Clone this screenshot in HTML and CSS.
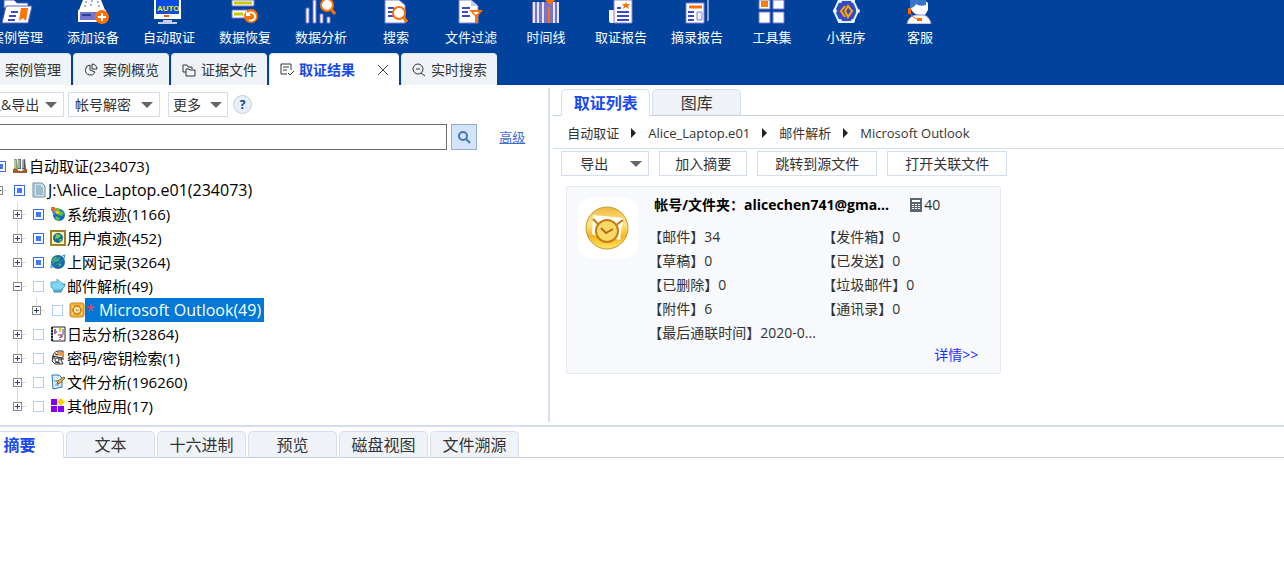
FILE: index.html
```html
<!DOCTYPE html>
<html lang="zh-CN">
<head>
  <meta charset="UTF-8">
  <meta name="viewport" content="width=device-width, initial-scale=1.0">
  <title>取证结果</title>
  <link rel="stylesheet" href="styles.css">
</head>
<body>
  <header class="header">
    <nav class="toolbar">
      <button class="tool">
        <svg width="32" height="24" viewBox="0 0 32 24"><path d="M3 0h10l3 3h11v5H3z" fill="#fff" stroke="#5b62c0"/><path d="M5 6h26l-4 17H1z" fill="#fff" stroke="#5b62c0"/><path d="M10 12h7M8 16h7M7 20h7" stroke="#3a4ac8" stroke-width="2"/><path d="M20 8h7l-2 13-3-3-4 3z" fill="#ff7200"/></svg>
        案例管理
      </button>
      <button class="tool">
        <svg width="32" height="24" viewBox="0 0 32 24"><path d="M6 0h18l4 10H2z" fill="#fff"/><path d="M8 2h2m4-1h2m4 1h2M7 6h2m4-1h2m6 1h2" stroke="#5260b4" stroke-width="1"/><path d="M2 11h26v10H2z" fill="#7674cc" stroke="#fff" stroke-width="2"/><path d="M5 15h9" stroke="#23439a" stroke-width="2"/><circle cx="25" cy="17" r="7" fill="#ff7200"/><path d="M21 17h8M25 13v8" stroke="#fff" stroke-width="2"/></svg>
        添加设备
      </button>
      <button class="tool">
        <svg width="32" height="24" viewBox="0 0 32 24"><path d="M1 0h27v19H1z" fill="#fff"/><path d="M3 0h23v14H3z" fill="#0b4de2"/><text x="4" y="11" class="auto-mark">AUTO</text><path d="M11 16h5" stroke="#ff5a00" stroke-width="2"/><path d="M10 20h9v2h5v2H5v-2h5z" fill="#c8ccf0"/></svg>
        自动取证
      </button>
      <button class="tool">
        <svg width="32" height="24" viewBox="0 0 32 24"><path d="M3 0h22v6H3zM3 10h22v8H3z" fill="#fff" stroke="#777bce"/><path d="M5 3h18M5 14h9" stroke="#c9c900" stroke-width="3"/><circle cx="22" cy="16" r="7" fill="#ff7200"/><path d="M19 14a4 4 0 1 1 1 6" fill="none" stroke="#fff" stroke-width="2"/><path d="M17 11v5h5z" fill="#fff"/></svg>
        数据恢复
      </button>
      <button class="tool">
        <svg width="32" height="24" viewBox="0 0 32 24"><path d="M1 8h3v15H1zM8 0h3v23H8zM15 14h3v9h-3zM22 17h3v6h-3z" fill="#fff" stroke="#7774cf"/><circle cx="22" cy="5" r="6" fill="#fff" stroke="#ff7200" stroke-width="2"/><path d="m26 9 4 5" stroke="#ff7200" stroke-width="3"/></svg>
        数据分析
      </button>
      <button class="tool">
        <svg width="32" height="24" viewBox="0 0 32 24"><path d="M5 0h14l6 5v18H5z" fill="#fff" stroke="#8580cf"/><path d="M8 8h6M8 12h6M8 16h6" stroke="#3a4ac8" stroke-width="2"/><circle cx="19" cy="13" r="6" fill="#fff" stroke="#ff7200" stroke-width="2"/><path d="m23 17 4 5" stroke="#ff7200" stroke-width="3"/></svg>
        搜索
      </button>
      <button class="tool">
        <svg width="32" height="24" viewBox="0 0 32 24"><path d="M4 0h12l7 6v17H4z" fill="#fff" stroke="#8580cf"/><path d="M16 0v6h7" fill="#c9ccf5"/><path d="M7 8h8M7 12h6M7 16h8" stroke="#3a4ac8" stroke-width="2"/><path d="M14 10h14l-5 6v7h-3v-7z" fill="#ff7200"/><path d="M18 12h6l-3 3z" fill="#fff"/></svg>
        文件过滤
      </button>
      <button class="tool">
        <svg width="32" height="24" viewBox="0 0 32 24"><path d="M2 2h27v21H2z" fill="#7874cb"/><path d="M4 2v21M8 2v21M13 2v21M24 2v21M28 2v21" stroke="#e5e6ff" stroke-width="2"/><path d="M19 7v16" stroke="#ff7200" stroke-width="2"/><path d="M15 0h10l-5 5z" fill="#ff7200"/></svg>
        时间线
      </button>
      <button class="tool">
        <svg width="32" height="24" viewBox="0 0 32 24"><path d="M4 10h5v13H6q-2 0-2-3z" fill="#fff"/><path d="M9 0h18v23H9z" fill="#fff" stroke="#8580cf"/><path d="M12 8h4M12 12h12M12 16h12M12 20h12" stroke="#3a4ac8" stroke-width="2"/><path d="m21 2 1 2h3l-2 2 1 3-3-2-3 2 1-3-2-2h3z" fill="#ff7200"/></svg>
        取证报告
      </button>
      <button class="tool">
        <svg width="32" height="24" viewBox="0 0 32 24"><path d="M5 3h18v20H5z" fill="#fff" stroke="#8580cf"/><path d="M8 7h13" stroke="#ff7200" stroke-width="3"/><path d="M7 12h6M7 16h6M7 20h6" stroke="#3a4ac8" stroke-width="2"/><path d="M16 12h5v8h-5z" fill="#eef" stroke="#8580cf"/><path d="M27 0v21" stroke="#fff"/></svg>
        摘录报告
      </button>
      <button class="tool">
        <svg width="32" height="24" viewBox="0 0 32 24"><path d="M3 0h11v9H3zM17 0h11v9H17zM3 12h11v11H3zM17 12h11v11H17z" fill="#fff" stroke="#777bce"/><path d="M5 1h7v6H5z" fill="#ff7f00"/></svg>
        工具集
      </button>
      <button class="tool">
        <svg width="32" height="24" viewBox="0 0 32 24"><path d="M9 0h14l5 11-5 11H9L4 11z" fill="#3948c4" stroke="#d9f4ff" stroke-width="2"/><g fill="#e2faff"><circle cx="5" cy="11" r="2"/><circle cx="28" cy="11" r="2"/><circle cx="10" cy="21" r="2"/><circle cx="23" cy="21" r="2"/><circle cx="10" cy="1" r="2"/><circle cx="23" cy="1" r="2"/></g><path d="m15 6-4 5 4 6M18 6l-3 5 3 6 4-6z" fill="none" stroke="#ffaa00" stroke-width="2"/></svg>
        小程序
      </button>
      <button class="tool">
        <svg width="32" height="24" viewBox="0 0 32 24"><path d="M7 3q8-8 17 0v7l-3 5h-6q-6-1-8-6z" fill="#fff"/><path d="M6 0h16v5q-6 2-10-1-2 4-6 4z" fill="#3677cc"/><path d="M3 24q1-7 8-9h9q6 2 7 9z" fill="#fff" stroke="#918bd2"/><path d="M4 8h3v6H4z" fill="#ff6500"/><path d="M6 13q3 6 9 6" fill="none" stroke="#ff6500"/><path d="M13 18h5v3h-5z" fill="#ff6500"/></svg>
        客服
      </button>
    </nav>
    <div class="page-tabs" role="tablist">
      <button class="page-tab first" role="tab">案例管理</button>
      <button class="page-tab" role="tab">
        <svg width="14" height="14" viewBox="0 0 14 14"><path d="M6 2a5 5 0 1 0 5 7L6 7zM8 1v5h5a5 5 0 0 0-5-5z" fill="none" stroke="#333"/></svg>
        案例概览
      </button>
      <button class="page-tab" role="tab">
        <svg width="14" height="14" viewBox="0 0 14 14"><path d="M4 9H1V2h4l1 2h4v2M4 6h3l1 1h5v6H4z" fill="none" stroke="#333"/></svg>
        证据文件
      </button>
      <button class="page-tab active" role="tab" aria-selected="true">
        <svg width="14" height="14" viewBox="0 0 14 14"><path d="M7 11H1V1h10v6M3 4h6M3 7h4M8 10l2 2 4-4" fill="none" stroke="#333"/></svg>
        取证结果
        <svg class="close" width="12" height="12" viewBox="0 0 12 12"><path d="m1 1 10 10M11 1 1 11" stroke="#444"/></svg>
      </button>
      <button class="page-tab" role="tab">
        <svg width="14" height="14" viewBox="0 0 14 14"><path d="M11 6a5 5 0 1 1-10 0 5 5 0 0 1 10 0zM4 6h4M9 10l4 3" fill="none" stroke="#333"/></svg>
        实时搜索
      </button>
    </div>
  </header>

  <main class="workspace">
    <section class="side">
      <div class="side-actions">
        <button class="btn import">导入&amp;导出<span class="arrow"></span></button>
        <button class="btn decrypt">帐号解密<span class="arrow"></span></button>
        <button class="btn more">更多<span class="arrow"></span></button>
        <button class="help" aria-label="帮助">?</button>
      </div>
      <form class="search">
        <input type="text" class="search-input" aria-label="搜索">
        <button type="button" class="search-btn" aria-label="查找">
          <svg width="14" height="14" viewBox="0 0 14 14"><circle cx="6" cy="6" r="4" fill="none" stroke="#4a75b0" stroke-width="2"/><path d="m9 9 4 4" stroke="#4a75b0" stroke-width="2"/></svg>
        </button>
        <a href="#" class="advanced">高级</a>
      </form>

      <ul class="tree">
        <li>
          <div class="node">
            <button class="toggle open" aria-label="折叠"></button>
            <input type="checkbox" class="check part" id="n0">
            <svg width="16" height="16" viewBox="0 0 16 16"><path d="M2 1h3l1 10H2z" fill="#8a9e55"/><path d="M6 1h3v10H6z" fill="#566d87"/><path d="M10 2l3-1 1 10h-4z" fill="#555"/><path d="M3 2v8M7 2v8M11 2v8" stroke="#e8eee0"/><path d="M1 11h4l2 2h3l2-2h3v4H1z" fill="#a65a2b"/></svg>
            <label for="n0">自动取证(234073)</label>
          </div>
          <ul>
            <li>
              <div class="node">
                <button class="toggle open" aria-label="折叠"></button>
                <input type="checkbox" class="check part" id="n1">
                <svg width="16" height="16" viewBox="0 0 16 16"><path d="M2 1h9l3 3v11H2z" fill="#cde4ef" stroke="#728b9e"/><path d="M5 4h5M5 6h7M5 8h7M5 10h7M5 12h7" stroke="#7093a8"/><path d="M3 2v12" stroke="#90abba"/></svg>
                <label for="n1" class="latin">J:\Alice_Laptop.e01(234073)</label>
              </div>
              <ul>
                <li>
                  <div class="node">
                    <button class="toggle" aria-label="展开"></button>
                    <input type="checkbox" class="check part" id="n2">
                    <svg width="16" height="16" viewBox="0 0 16 16"><circle cx="9" cy="9" r="6" fill="#1768bc"/><path d="M9 4l5 3-2 3-4-1zM6 10l4 2-1 3-4-2z" fill="#55c541"/><path d="M1 1h4v4H1z" fill="#e96b2b"/><path d="M5 2h4v3H5z" fill="#75ba38"/><path d="M2 5h3v4H3z" fill="#3a8fd7"/><path d="M5 5h4v3H6z" fill="#f4c423"/></svg>
                    <label for="n2">系统痕迹(1166)</label>
                  </div>
                </li>
                <li>
                  <div class="node">
                    <button class="toggle" aria-label="展开"></button>
                    <input type="checkbox" class="check part" id="n3">
                    <svg width="16" height="16" viewBox="0 0 16 16"><path d="M1 1h14v14H1z" fill="#fff5bd" stroke="#9f812a" stroke-width="2"/><circle cx="8" cy="8" r="5" fill="#176c92"/><path d="M6 4l5 1-2 3-4 1zM9 9h3l-2 3z" fill="#73cd5d"/></svg>
                    <label for="n3">用户痕迹(452)</label>
                  </div>
                </li>
                <li>
                  <div class="node">
                    <button class="toggle" aria-label="展开"></button>
                    <input type="checkbox" class="check part" id="n4">
                    <svg width="16" height="16" viewBox="0 0 16 16"><circle cx="8" cy="8" r="7" fill="#1769aa"/><path d="M5 3l5 1-1 3-4 1-2 2-1-4zM8 9l4 1-3 3z" fill="#47b657"/><path d="M1 14Q0 9 7 5t8-4q0 5-6 8t-8 5z" fill="none" stroke="#298ac0"/></svg>
                    <label for="n4">上网记录(3264)</label>
                  </div>
                </li>
                <li>
                  <div class="node">
                    <button class="toggle open" aria-label="折叠"></button>
                    <input type="checkbox" class="check" id="n5">
                    <svg width="16" height="16" viewBox="0 0 16 16"><path d="M4 6h11l-4 8H4z" fill="#60b8dd" stroke="#2c85b2"/><path d="M1 4h6V1l8 7-4 4H4L1 9z" fill="#83d4f4" stroke="#4ba9d4"/></svg>
                    <label for="n5">邮件解析(49)</label>
                  </div>
                  <ul>
                    <li>
                      <div class="node">
                        <button class="toggle" aria-label="展开"></button>
                        <input type="checkbox" class="check" id="n6">
                        <svg width="16" height="16" viewBox="0 0 16 16"><rect x="1" y="1" width="14" height="14" rx="2" fill="#f4b241" stroke="#c98520"/><path d="M3 4h10v8H3z" fill="#fff2c7"/><circle cx="8" cy="8" r="4" fill="#fff2ce" stroke="#d78a13" stroke-width="2"/><path d="M7 7l1 2 2-1" fill="none" stroke="#cb780a"/></svg>
                        <label for="n6" class="latin selected"><span class="star">*</span> Microsoft Outlook(49)</label>
                      </div>
                    </li>
                  </ul>
                </li>
                <li>
                  <div class="node">
                    <button class="toggle" aria-label="展开"></button>
                    <input type="checkbox" class="check" id="n7">
                    <svg width="16" height="16" viewBox="0 0 16 16"><path d="M2 1h13v14H2z" fill="#fff" stroke="#222"/><path d="M2 1v14" stroke="#222" stroke-width="2" stroke-dasharray="2 1"/><path d="M5 3v5M4 6h3" stroke="#a56bad" stroke-width="2"/><path d="M10 2v4" stroke="#e8c900" stroke-width="2"/><path d="M13 3v6" stroke="#253fc9"/><path d="M8 9h4v2h-2v1M10 13v1" fill="none" stroke="#a40c16" stroke-width="1"/></svg>
                    <label for="n7">日志分析(32864)</label>
                  </div>
                </li>
                <li>
                  <div class="node">
                    <button class="toggle" aria-label="展开"></button>
                    <input type="checkbox" class="check" id="n8">
                    <svg width="16" height="16" viewBox="0 0 16 16"><path d="M3 7q0-5 5-6h5v6l-2 3 2 4H5l-3-3z" fill="#eee" stroke="#333"/><path d="M7 2h5l2 3-3 1-4-1z" fill="#ef9b38"/><path d="M2 6l10 2M5 4l3 1M2 8h3M8 9h6M5 12l5 1" stroke="#222"/><circle cx="7" cy="10" r="2" fill="#fff" stroke="#444"/></svg>
                    <label for="n8">密码/密钥检索(1)</label>
                  </div>
                </li>
                <li>
                  <div class="node">
                    <button class="toggle" aria-label="展开"></button>
                    <input type="checkbox" class="check" id="n9">
                    <svg width="16" height="16" viewBox="0 0 16 16"><path d="M2 1h7l3 3v9l-9 2z" fill="#d5edff" stroke="#2677b6"/><path d="M4 6l2 2 1-2 2 2M5 11h4" fill="none" stroke="#698aa6"/><path d="m7 10 1-3 6-4 1 1-5 5z" fill="#edc44a" stroke="#865d24"/></svg>
                    <label for="n9">文件分析(196260)</label>
                  </div>
                </li>
                <li>
                  <div class="node">
                    <button class="toggle" aria-label="展开"></button>
                    <input type="checkbox" class="check" id="n10">
                    <svg width="16" height="16" viewBox="0 0 16 16"><path d="M1 1h6v6H1zM1 8h6v6H1zM8 8h6v6H8z" fill="#8700f5"/><path d="m11 0 4 4-4 4-4-4z" fill="#ffd400"/></svg>
                    <label for="n10">其他应用(17)</label>
                  </div>
                </li>
              </ul>
            </li>
          </ul>
        </li>
      </ul>
    </section>

    <section class="results">
      <div class="tabs" role="tablist">
        <button class="tab active" role="tab" aria-selected="true">取证列表</button>
        <button class="tab" role="tab">图库</button>
      </div>
      <nav class="breadcrumb">
        <span>自动取证</span>
        <span>Alice_Laptop.e01</span>
        <span>邮件解析</span>
        <span>Microsoft Outlook</span>
      </nav>
      <div class="result-actions">
        <button class="btn export">导出<span class="arrow"></span></button>
        <button class="btn">加入摘要</button>
        <button class="btn wide">跳转到源文件</button>
        <button class="btn wide">打开关联文件</button>
      </div>
      <article class="card">
        <div class="card-icon">
          <svg width="48" height="48" viewBox="0 0 48 48"><defs><linearGradient id="gold" x2="0" y2="1"><stop stop-color="#efb63a"/><stop offset=".4" stop-color="#ffe58b"/><stop offset=".7" stop-color="#f3b61d"/><stop offset="1" stop-color="#ffe66b"/></linearGradient></defs><circle cx="23" cy="24" r="21" fill="url(#gold)" stroke="#c79a35"/><path d="m9 11 30 3-3 22-7-2H17l-9-4z" fill="#fffdf2"/><path d="m9 15 7 7m15 0 8-6" stroke="#bd7b27" stroke-width="2"/><circle cx="23" cy="27" r="11" fill="#fada67" stroke="#c77d15" stroke-width="2"/><path d="m17 24 5 5 7-4" fill="none" stroke="#b86b15" stroke-width="2"/></svg>
        </div>
        <div class="card-body">
          <div class="card-head">
            <h2 class="card-title">帐号/文件夹：alicechen741@gma...</h2>
            <svg width="12" height="14" viewBox="0 0 12 14"><path d="M0 0h12v14H0z" fill="#596672"/><path d="M2 2h8v2H2z" fill="#fff"/><path d="M2 6.5h2m1 0h2m1 0h2M2 8.500h2m1 0h2m1 0h2M2 10.500h2m1 0h2m1 0h2" stroke="#fff"/></svg>
            <span>40</span>
          </div>
          <ul class="stats">
            <li>【邮件】34</li>
            <li>【发件箱】0</li>
            <li>【草稿】0</li>
            <li>【已发送】0</li>
            <li>【已删除】0</li>
            <li>【垃圾邮件】0</li>
            <li>【附件】6</li>
            <li>【通讯录】0</li>
            <li>【最后通联时间】2020-0...</li>
          </ul>
          <a href="#" class="detail">详情&gt;&gt;</a>
        </div>
      </article>
    </section>
  </main>

  <section class="preview">
    <div class="tabs" role="tablist">
      <button class="tab active" role="tab" aria-selected="true">摘要</button>
      <button class="tab" role="tab">文本</button>
      <button class="tab" role="tab">十六进制</button>
      <button class="tab" role="tab">预览</button>
      <button class="tab" role="tab">磁盘视图</button>
      <button class="tab" role="tab">文件溯源</button>
    </div>
  </section>
</body>
</html>
```
FILE: styles.css
```css
* { box-sizing: border-box; }
body { margin: 0; font-family: "Open Sans", "Noto Sans CJK SC", sans-serif; font-size: 14px; line-height: 24px; color: #333; background: #fff; overflow-x: hidden; }
button { font: inherit; color: inherit; padding: 0; cursor: pointer; white-space: nowrap; }
svg { display: block; flex: none; }
ul { list-style: none; margin: 0; padding: 0; }

/* top bar */
.header { background: #00429c; overflow: hidden; }
.toolbar { display: flex; height: 53px; margin-left: -21px; }
.tool { display: flex; flex-direction: column; align-items: center; flex: none; gap: 3px; min-width: 74px; padding: 0 12px; border: none; background: none; color: #fff; font-size: 13px; line-height: 20px; }
.auto-mark { font: bold 8px "Liberation Sans", sans-serif; fill: #f5f000; }
.page-tabs { display: flex; gap: 2px; margin-left: -25px; }
.page-tab { display: flex; align-items: center; gap: 5px; height: 32px; padding: 1px 10px 0; border: 1px solid #dbe5f5; border-bottom: none; border-right-width: 0; border-radius: 4px 4px 0 0; background: #eff3f8; }
.page-tab.first { width: 96px; justify-content: flex-end; }
.page-tab.active { background: #fff; color: #1a49ec; font-weight: bold; }
.close { margin-left: 17px; }

/* shared controls */
.btn { display: flex; align-items: center; justify-content: center; height: 25px; padding: 0 15px; border: 1px solid #d3def0; background: #fff; }
.btn.wide { padding: 0 17px; }
.arrow { border: 6px solid transparent; border-top-color: #666; border-bottom: none; }
.tabs { display: flex; gap: 2px; background: linear-gradient(#c9cfde, #c9cfde) bottom / 100% 1px no-repeat; }
.tab { width: 89px; height: 27px; border: 1px solid #d3def0; border-bottom-color: #c9cfde; border-radius: 5px 5px 0 0; background: #eff3f8; font-size: 16px; line-height: 24px; }
.tab.active { color: #1a49ec; font-weight: bold; background: #fff; border-bottom-color: #fff; }

.workspace { display: grid; grid-template-columns: 3fr 4fr; padding-top: 3px; border-bottom: 2px solid #d3def0; }

/* left panel */
.side { min-width: 0; margin-bottom: 3px; padding: 4px 0; border-right: 2px solid #d3def0; overflow: hidden; }
.side-actions { display: flex; align-items: center; }
.side-actions .btn { justify-content: space-between; padding: 0 6px; }
.side-actions .import { width: 104px; margin-left: -40px; margin-right: 4px; padding-left: 12px; }
.side-actions .decrypt { width: 92px; margin-right: 8px; }
.side-actions .more { width: 60px; margin-right: 5px; padding: 0 5px 0 4px; }
.help { width: 19px; height: 19px; border: 1px solid #c3cfdf; border-radius: 50%; background: #e9eff7; color: #123f94; font-weight: bold; font-size: 12px; line-height: 16px; }
.search { display: flex; align-items: center; gap: 4px; margin: 7px 23px 4px -4px; }
.search-input { flex: 1; min-width: 0; height: 26px; border: 1px solid #6b6b6b; }
.search-btn { display: flex; align-items: center; justify-content: center; width: 26px; height: 26px; border: 1px solid #8eaed5; background: #d3e3fa; }
.advanced { margin-left: 18px; color: #3c6cd8; font-size: 13px; }

/* evidence tree */
.tree { margin-left: -25px; color: #000; font-size: 15px; }
.tree ul { margin-left: 19px; background: linear-gradient(#d8d8d8, #d8d8d8) 4px 0 / 1px calc(100% - 12px) no-repeat; }
.tree > li > ul { background: none; }
.node { display: flex; align-items: center; height: 24px; background: linear-gradient(#d8d8d8, #d8d8d8) 9px 12px / 4px 1px no-repeat; }
.toggle { flex: none; width: 9px; height: 9px; margin-right: 11px; border: 1px solid #888; background: linear-gradient(#223f70, #223f70) center / 5px 1px no-repeat, linear-gradient(#223f70, #223f70) center / 1px 5px no-repeat, #fff; }
.toggle.open { background: linear-gradient(#223f70, #223f70) center / 5px 1px no-repeat, #fff; }
.check { appearance: none; flex: none; width: 11px; height: 11px; margin: 0 6px 0 0; border: 1px solid #b5cdfb; background: #fff; }
.check.part { border-color: #3470f5; background: #3d79fb; box-shadow: inset 0 0 0 2px #fff; }
.node label { padding-left: 1px; white-space: nowrap; }
.node .latin { font-size: 16px; }
.node .selected { padding: 0 3px 0 1px; background: #0078d7; color: #fff; }
.star { color: #f2415a; }

/* result panel */
.results { min-width: 0; padding: 1px 0 0 3px; }
.results .tabs { padding-left: 8px; }
.breadcrumb { display: flex; padding: 5px 0 3px 14px; border-bottom: 1px solid #d3def0; font-size: 13px; }
.breadcrumb span { display: flex; align-items: center; }
.breadcrumb span + span::before { content: ""; margin: 0 12px; border: 5px solid transparent; border-left-color: #222; border-right: none; }
.result-actions { display: flex; gap: 10px; padding: 2px 0 0 8px; }
.export { width: 88px; padding: 0 6px 0 18px; justify-content: space-between; }
.card { display: flex; gap: 16px; width: 435px; max-width: 100%; margin: 10px 0 0 13px; padding: 11px 11px 8px; border: 1px solid #e5eaf2; border-radius: 2px; background: #f7f9fc; }
.card-icon { display: flex; align-items: center; justify-content: center; flex: none; width: 60px; height: 60px; border-radius: 14px; background: #fff; }
.card-body { flex: 1; display: flex; flex-direction: column; }
.card-head { display: flex; align-items: center; gap: 2px; height: 14px; margin-bottom: 13px; }
.card-title { width: 254px; margin: 0; color: #000; font-size: 14px; white-space: nowrap; }
.stats { display: grid; grid-template-columns: 174px 1fr; margin-left: -6px; white-space: nowrap; }
.detail { align-self: flex-end; margin-right: 11px; line-height: 20px; color: #1a30ff; text-decoration: none; }

/* preview panel */
.preview { padding-top: 4px; overflow: hidden; }
.preview .tabs { padding-left: 0; margin-left: -25px; }
```
